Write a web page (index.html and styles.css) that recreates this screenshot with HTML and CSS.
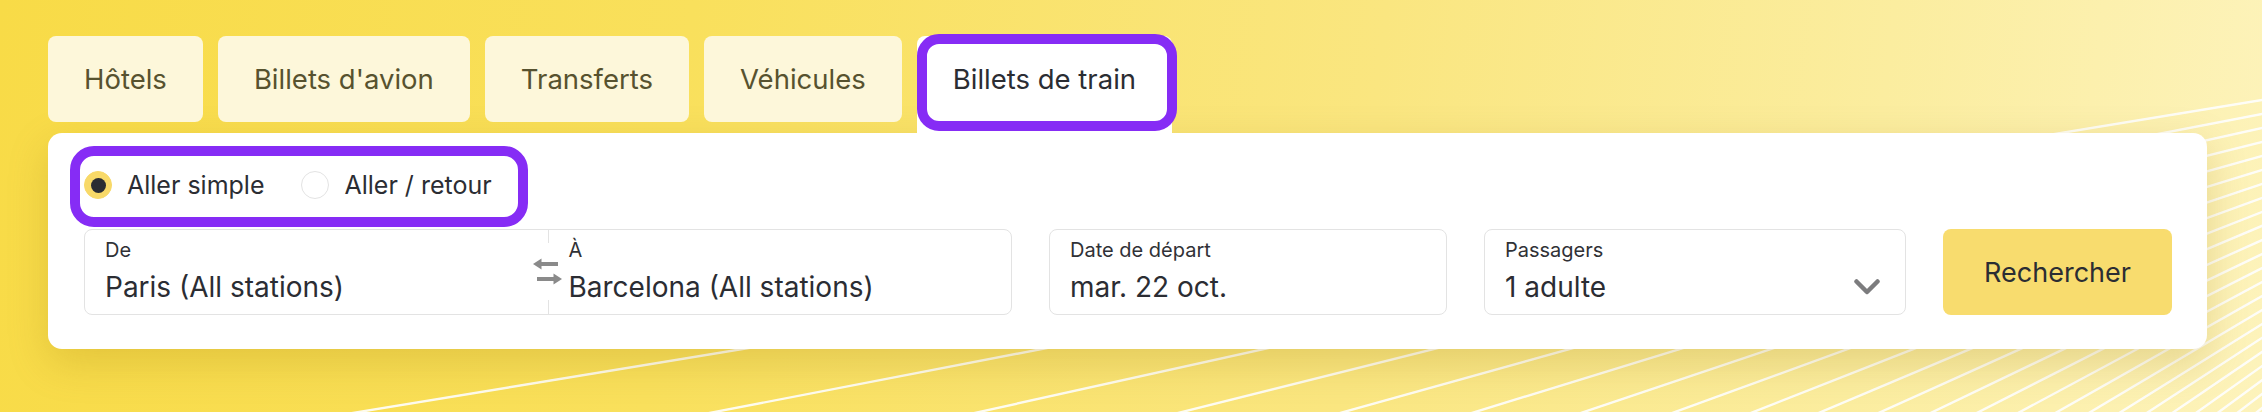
FILE: index.html
```html
<!DOCTYPE html>
<html lang="fr">
<head>
<meta charset="utf-8">
<title>Billets de train</title>
<link rel="stylesheet" href="styles.css">
</head>
<body>
<svg class="bg-lines" width="2262" height="412" viewBox="0 0 2262 412" aria-hidden="true">
  <line x1="2750" y1="20" x2="310" y2="420"/>
  <line x1="2750" y1="20" x2="673" y2="420"/>
  <line x1="2750" y1="20" x2="943" y2="420"/>
  <line x1="2750" y1="20" x2="1150" y2="420"/>
  <line x1="2750" y1="20" x2="1315" y2="420"/>
  <line x1="2750" y1="20" x2="1449" y2="420"/>
  <line x1="2750" y1="20" x2="1560" y2="420"/>
  <line x1="2750" y1="20" x2="1653" y2="420"/>
  <line x1="2750" y1="20" x2="1733" y2="420"/>
  <line x1="2750" y1="20" x2="1802" y2="420"/>
  <line x1="2750" y1="20" x2="1863" y2="420"/>
  <line x1="2750" y1="20" x2="1916" y2="420"/>
  <line x1="2750" y1="20" x2="1963" y2="420"/>
  <line x1="2750" y1="20" x2="2005" y2="420"/>
  <line x1="2750" y1="20" x2="2043" y2="420"/>
  <line x1="2750" y1="20" x2="2077" y2="420"/>
  <line x1="2750" y1="20" x2="2108" y2="420"/>
  <line x1="2750" y1="20" x2="2136" y2="420"/>
  <line x1="2750" y1="20" x2="2162" y2="420"/>
  <line x1="2750" y1="20" x2="2186" y2="420"/>
  <line x1="2750" y1="20" x2="2208" y2="420"/>
  <line x1="2750" y1="20" x2="2228" y2="420"/>
  <line x1="2750" y1="20" x2="2247" y2="420"/>
</svg>
<main class="search">
  <nav class="tabs">
    <button class="tab">Hôtels</button>
    <button class="tab">Billets d'avion</button>
    <button class="tab">Transferts</button>
    <button class="tab">Véhicules</button>
    <button class="tab tab-active">Billets de train</button>
  </nav>
  <section class="card">
    <div class="trip-type">
      <label class="radio radio-checked"><span class="radio-dot"></span>Aller simple</label>
      <label class="radio"><span class="radio-dot"></span>Aller / retour</label>
    </div>
    <div class="fields">
      <div class="field route">
        <div class="route-part">
          <span class="label">De</span>
          <span class="value">Paris (All stations)</span>
        </div>
        <div class="route-part route-to">
          <span class="label">À</span>
          <span class="value">Barcelona (All stations)</span>
        </div>
        <button class="swap" aria-label="Inverser">
          <svg width="31" height="57" viewBox="0 0 31 57">
            <path class="arrow-shaft" d="M8 21 H26"/>
            <path class="arrow-head" d="M1 21 L9.5 15.5 L9.5 26.5 Z"/>
            <path class="arrow-shaft" d="M5 36 H23"/>
            <path class="arrow-head" d="M30 36 L21.5 30.5 L21.5 41.5 Z"/>
          </svg>
        </button>
      </div>
      <div class="field">
        <span class="label">Date de départ</span>
        <span class="value">mar. 22 oct.</span>
      </div>
      <div class="field field-select">
        <span class="label">Passagers</span>
        <div class="value-row">
          <span class="value">1 adulte</span>
          <svg class="chevron" width="26" height="16" viewBox="0 0 26 16">
            <path d="M2.5 2.5 L13 13 L23.5 2.5"/>
          </svg>
        </div>
      </div>
      <button class="search-btn">Rechercher</button>
    </div>
  </section>
</main>
</body>
</html>
```

FILE: styles.css
```css
html, body {
  margin: 0;
  padding: 0;
}

body {
  width: 2262px;
  height: 412px;
  overflow: hidden;
  position: relative;
  font-family: Inter, "Liberation Sans", sans-serif;
  background: linear-gradient(97deg, #f8db47 0%, #f9e05c 30%, #fae680 60%, #fbed9f 82%, #fdf3bb 100%);
}

.bg-lines {
  position: absolute;
  left: 0;
  top: 0;
  display: block;
}

.bg-lines line {
  stroke: #ffffff;
  stroke-width: 2.4;
  opacity: 0.9;
}

.search {
  position: relative;
  padding: 36px 55px 0 48px;
}

.tabs {
  display: flex;
  align-items: flex-start;
  gap: 15px;
}

.tab {
  height: 86px;
  padding: 0 36px;
  margin: 0;
  border: 0;
  border-radius: 8px;
  background: #fdf7da;
  color: #57522f;
  font-family: Inter, "Liberation Sans", sans-serif;
  font-size: 27.5px;
  font-weight: 400;
  line-height: 86px;
  box-sizing: border-box;
  cursor: pointer;
}

.tab-active {
  position: relative;
  height: 97px;
  padding-bottom: 11px;
  line-height: 86px;
  background: #ffffff;
  color: #2b2d33;
  border-radius: 8px 8px 0 0;
}

.tab-active::after {
  content: "";
  position: absolute;
  top: -2px;
  left: 0;
  right: -5px;
  bottom: 2px;
  border: 10px solid #862cf5;
  border-radius: 22px;
}

.card {
  height: 216px;
  box-sizing: border-box;
  padding: 38px 35px 35px 36px;
  background: #ffffff;
  border-radius: 14px;
  box-shadow: 0 14px 40px rgba(150, 115, 0, 0.22);
}

.trip-type {
  position: relative;
  display: inline-flex;
  align-items: center;
  height: 28px;
}

.trip-type::after {
  content: "";
  position: absolute;
  top: -25px;
  bottom: -28px;
  left: -14px;
  right: -36px;
  border: 10px solid #862cf5;
  border-radius: 24px;
}

.radio {
  display: flex;
  align-items: center;
  gap: 15px;
  font-size: 25px;
  line-height: 28px;
  color: #2b2d33;
}

.radio + .radio {
  margin-left: 37px;
}

.radio-dot {
  width: 28px;
  height: 28px;
  box-sizing: border-box;
  border-radius: 50%;
  border: 1px solid #e3e3e3;
  background: #ffffff;
  display: flex;
  align-items: center;
  justify-content: center;
}

.radio-checked .radio-dot {
  background: #f8d968;
  border-color: #f8d968;
}

.radio-checked .radio-dot::before {
  content: "";
  width: 15px;
  height: 15px;
  border-radius: 50%;
  background: #2b2d33;
}

.fields {
  display: grid;
  grid-template-columns: 928px 398px 422px 1fr;
  column-gap: 37px;
  height: 85px;
  margin-top: 30px;
}

.field {
  border: 1px solid #e3e3e3;
  border-radius: 8px;
  box-sizing: border-box;
  padding: 8px 20px 0;
  background: #ffffff;
}

.label {
  display: block;
  font-size: 20px;
  line-height: 24px;
  color: #303136;
}

.value {
  display: block;
  font-size: 28px;
  line-height: 34px;
  margin-top: 8px;
  color: #2b2d33;
}

.route {
  position: relative;
  display: flex;
  padding: 0;
}

.route-part {
  flex: 1;
  padding: 8px 20px 0;
}

.route-to {
  border-left: 1px solid #e3e3e3;
}

.swap {
  position: absolute;
  left: calc(50% - 16px);
  top: 13px;
  width: 31px;
  height: 57px;
  padding: 0;
  border: 0;
  background: #ffffff;
  cursor: pointer;
}

.swap svg {
  display: block;
}

.arrow-shaft {
  stroke: #8a8a8a;
  stroke-width: 4;
  fill: none;
}

.arrow-head {
  fill: #8a8a8a;
}

.value-row {
  display: flex;
  align-items: center;
  justify-content: space-between;
  margin-top: 8px;
}

.value-row .value {
  margin-top: 0;
}

.chevron {
  display: block;
  margin-right: 5px;
}

.chevron path {
  fill: none;
  stroke: #7c7c7e;
  stroke-width: 4.5;
  stroke-linecap: round;
  stroke-linejoin: round;
}

.search-btn {
  height: 86px;
  margin: 0;
  border: 0;
  border-radius: 8px;
  background: #f8dc6e;
  color: #2b2d33;
  font-family: Inter, "Liberation Sans", sans-serif;
  font-size: 27px;
  cursor: pointer;
}
```
